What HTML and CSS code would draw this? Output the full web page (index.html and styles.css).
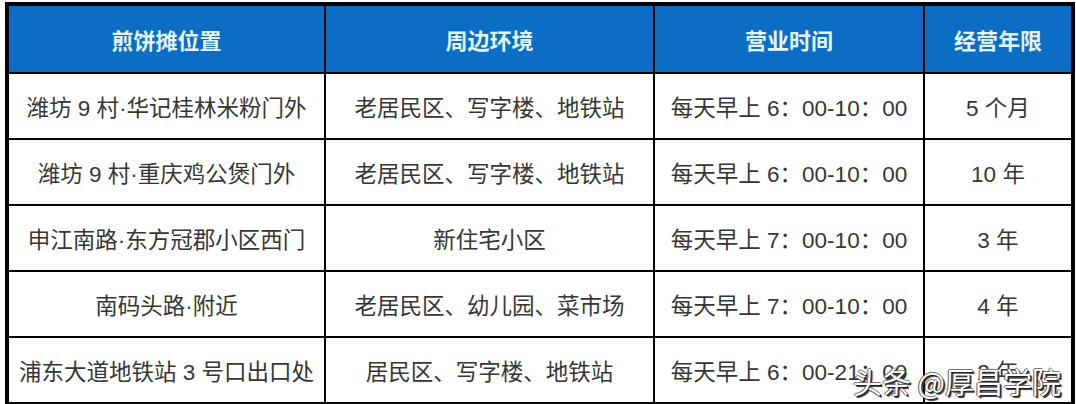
FILE: index.html
```html
<!DOCTYPE html>
<html lang="zh-CN">
<head>
<meta charset="utf-8">
<title>煎饼摊位置</title>
<link rel="stylesheet" href="styles.css">
</head>
<body>
<div class="wrap">
<table class="grid">
  <colgroup>
    <col class="c1"><col class="c2"><col class="c3"><col class="c4">
  </colgroup>
  <thead>
    <tr><th>煎饼摊位置</th><th>周边环境</th><th>营业时间</th><th>经营年限</th></tr>
  </thead>
  <tbody>
    <tr><td>潍坊 9 村·华记桂林米粉门外</td><td>老居民区、写字楼、地铁站</td><td>每天早上 6：00-10：00</td><td>5 个月</td></tr>
    <tr><td>潍坊 9 村·重庆鸡公煲门外</td><td>老居民区、写字楼、地铁站</td><td>每天早上 6：00-10：00</td><td>10 年</td></tr>
    <tr><td>申江南路·东方冠郡小区西门</td><td>新住宅小区</td><td>每天早上 7：00-10：00</td><td>3 年</td></tr>
    <tr><td>南码头路·附近</td><td>老居民区、幼儿园、菜市场</td><td>每天早上 7：00-10：00</td><td>4 年</td></tr>
    <tr><td>浦东大道地铁站 3 号口出口处</td><td>居民区、写字楼、地铁站</td><td>每天早上 6：00-21：00</td><td>2 年</td></tr>
  </tbody>
</table>
<div class="mark">头条 @厚昌学院</div>
</div>
</body>
</html>
```
FILE: styles.css
```css
html, body {
  margin: 0;
  padding: 0;
  background: #fff;
}
body {
  padding: 2px 6px 2px 5px;
  font-family: "Liberation Sans", "Noto Sans CJK SC", sans-serif;
}
.wrap {
  position: relative;
  width: 1066px;
}
.grid {
  width: 1066px;
  height: 399px;
  border-collapse: collapse;
  table-layout: fixed;
  border: 4px solid #000;
}
.c1 { width: 318px; }
.c2 { width: 329px; }
.c3 { width: 270px; }
.c4 { width: 149px; }
.grid th, .grid td {
  border: 2px solid #000;
  text-align: center;
  vertical-align: middle;
  padding: 0;
  white-space: nowrap;
}
.grid th {
  background: #0b6ec4;
  color: #e4f4ff;
  font-size: 22px;
  font-weight: bold;
  height: 66px;
}
.grid td {
  color: #363636;
  font-size: 22.5px;
  height: 64px;
}
.mark {
  position: absolute;
  right: 10px;
  bottom: 10px;
  font-size: 29px;
  color: #fff;
  font-family: "Noto Sans CJK SC", sans-serif;
  text-shadow: 1px 1px 0 #222, -1px 0 0 #555, 0 -1px 0 #777, 2px 2px 1px #333;
  line-height: 1;
}
```
